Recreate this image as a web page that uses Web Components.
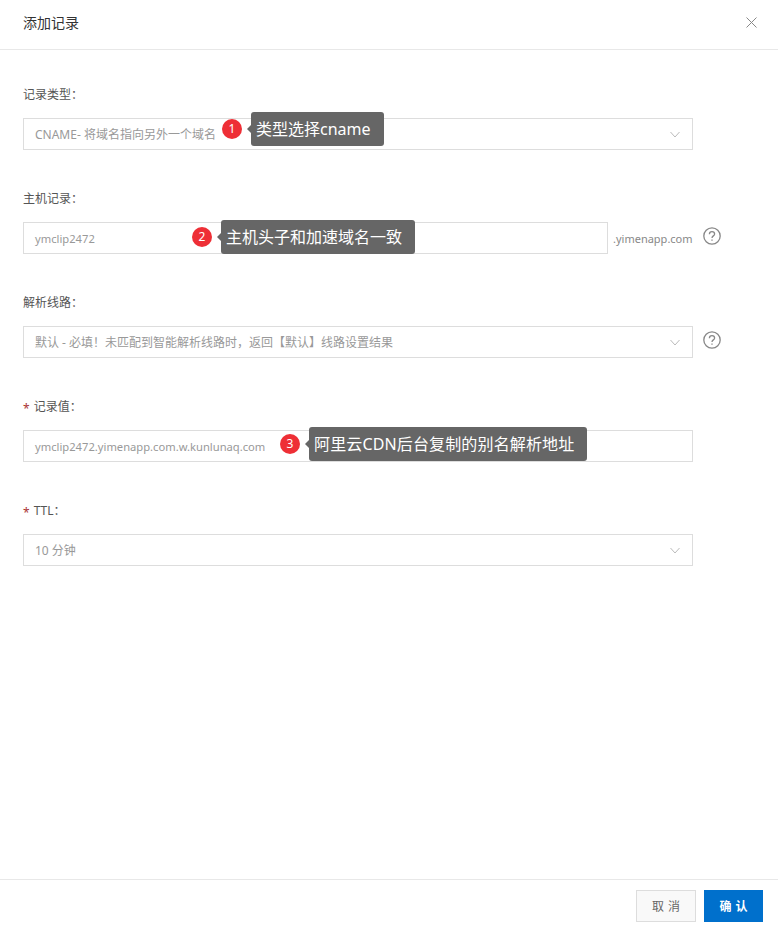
<!DOCTYPE html>
<html lang="zh">
<head>
<meta charset="utf-8">
<title>添加记录</title>
<style>
  html, body { margin: 0; height: 100%; background: #fff; }
  body { font-family: "Noto Sans", "Noto Sans CJK SC", sans-serif; }
</style>
</head>
<body>
<record-dialog>
  <form-field label="记录类型：">
    <select-box value="CNAME- 将域名指向另外一个域名"></select-box>
    <step-note slot="note" step="1" style="left:199px;top:-6px">类型选择cname</step-note>
  </form-field>
  <form-field label="主机记录：">
    <text-box value="ymclip2472" suffix=".yimenapp.com"></text-box>
    <help-icon slot="after"></help-icon>
    <step-note slot="note" step="2" style="left:169px;top:-2px">主机头子和加速域名一致</step-note>
  </form-field>
  <form-field label="解析线路：">
    <select-box value="默认 - 必填！未匹配到智能解析线路时，返回【默认】线路设置结果"></select-box>
    <help-icon slot="after"></help-icon>
  </form-field>
  <form-field label="记录值：" required>
    <text-box value="ymclip2472.yimenapp.com.w.kunlunaq.com"></text-box>
    <step-note slot="note" step="3" style="left:257px;top:-3px;--tip-spacing:.14px">阿里云CDN后台复制的别名解析地址</step-note>
  </form-field>
  <form-field label="TTL：" required>
    <select-box value="10 分钟"></select-box>
  </form-field>
</record-dialog>

<script>
class RecordDialog extends HTMLElement {
  constructor() {
    super();
    this.attachShadow({ mode: "open" });
    this.shadowRoot.innerHTML = `
      <style>
        :host { display: flex; flex-direction: column; height: 928px; box-sizing: border-box; }
        header {
          display: flex; align-items: center; justify-content: space-between;
          height: 43px; padding: 0 21px 6px 23px;
          border-bottom: 1px solid #e8e8e8;
          font-size: 14px; color: #333;
        }
        header svg { display: block; margin-top: 2px; }
        main { flex: 1; padding: 36px 0 0 23px; display: flex; flex-direction: column; gap: 40px; }
        footer {
          display: flex; justify-content: flex-end; gap: 8px;
          border-top: 1px solid #e8e8e8; padding: 10px 15px 6px 0;
        }
        button {
          width: 60px; height: 32px; padding: 0 0 0 4px; font: inherit; font-size: 12px;
          letter-spacing: 4px; border: 1px solid #ddd; background: #f9f9f9; color: #666;
        }
        button.primary { width: 59px; background: #0070cc; border-color: #0070cc; color: #fff; font-weight: 700; }
      </style>
      <header>
        <span>添加记录</span>
        <svg width="11" height="11" viewBox="0 0 11 11" fill="none" stroke="#888" stroke-width="1">
          <path d="M.5.5l10 10M10.5.5l-10 10"/>
        </svg>
      </header>
      <main><slot></slot></main>
      <footer>
        <button type="button">取消</button>
        <button type="button" class="primary">确认</button>
      </footer>`;
  }
}

class FormField extends HTMLElement {
  constructor() {
    super();
    this.attachShadow({ mode: "open" });
    this.shadowRoot.innerHTML = `
      <style>
        :host { display: block; }
        label { display: block; height: 18px; line-height: 18px; margin-bottom: 14px; font-size: 12px; color: #555; }
        i { font-style: normal; color: #a33; margin-right: 4px; vertical-align: -2px; }
        .row { position: relative; display: flex; align-items: center; width: 670px; height: 32px; }
        .control { width: 670px; flex: none; }
      </style>
      <label></label>
      <div class="row">
        <div class="control"><slot></slot></div>
        <slot name="after"></slot>
        <slot name="note"></slot>
      </div>`;
  }
  connectedCallback() {
    const label = this.shadowRoot.querySelector("label");
    label.textContent = this.getAttribute("label");
    if (this.hasAttribute("required")) {
      const star = document.createElement("i");
      star.textContent = "*";
      label.prepend(star);
    }
  }
}

class SelectBox extends HTMLElement {
  constructor() {
    super();
    this.attachShadow({ mode: "open" });
    this.shadowRoot.innerHTML = `
      <style>
        :host {
          display: flex; align-items: center; justify-content: space-between;
          height: 32px; box-sizing: border-box; padding: 0 12px 0 11px;
          border: 1px solid #ddd; font-size: 12px; color: #999;
        }
        svg { display: block; }
      </style>
      <span></span>
      <svg width="10" height="7" viewBox="0 0 10 7" fill="none" stroke="#bbb" stroke-width="1">
        <path d="M.5 1L5 6l4.5-5"/>
      </svg>`;
  }
  connectedCallback() {
    this.shadowRoot.querySelector("span").textContent = this.getAttribute("value");
  }
}

class TextBox extends HTMLElement {
  constructor() {
    super();
    this.attachShadow({ mode: "open" });
    this.shadowRoot.innerHTML = `
      <style>
        :host { display: flex; align-items: center; height: 32px; font-size: 11.2px; color: #999; }
        .input {
          flex: 1; height: 32px; line-height: 32px; box-sizing: border-box;
          padding: 0 11px; border: 1px solid #ddd;
        }
        .suffix { margin-left: 5px; width: 80px; white-space: nowrap; font-size: 11px; color: #888; }
        .suffix:empty { display: none; }
      </style>
      <div class="input"></div><div class="suffix"></div>`;
  }
  connectedCallback() {
    this.shadowRoot.querySelector(".input").textContent = this.getAttribute("value");
    this.shadowRoot.querySelector(".suffix").textContent = this.getAttribute("suffix") || "";
  }
}

class HelpIcon extends HTMLElement {
  constructor() {
    super();
    this.attachShadow({ mode: "open" });
    this.shadowRoot.innerHTML = `
      <style>
        :host { display: block; margin: -4px 0 0 10px; flex: none; }
        svg { display: block; }
      </style>
      <svg width="18" height="18" viewBox="0 0 18 18" fill="none" stroke="#888" stroke-width="1.3">
        <circle cx="9" cy="9" r="8.2"/>
        <path d="M6.4 7.2C6.4 5.6 7.6 4.7 9 4.7s2.6.9 2.6 2.3c0 1.9-2.6 1.9-2.6 4"/>
        <path d="M9 12.4v1.4"/>
      </svg>`;
  }
}

class StepNote extends HTMLElement {
  constructor() {
    super();
    this.attachShadow({ mode: "open" });
    this.shadowRoot.innerHTML = `
      <style>
        :host { position: absolute; display: flex; align-items: center; gap: 9px; }
        .badge {
          width: 20px; height: 20px; border-radius: 50%; background: #ee2f36; color: #fff;
          font-size: 12px; line-height: 20px; text-align: center; flex: none;
        }
        .tip {
          position: relative; height: 34px; line-height: 34px; padding: 0 13px 0 5px;
          background: #666; color: #fff; font-size: 16px; border-radius: 3px; white-space: nowrap;
          letter-spacing: var(--tip-spacing, 0);
        }
        .tip::before {
          content: ""; position: absolute; left: -4px; top: 13px;
          border: 4px solid transparent; border-left: 0; border-right-color: #666;
        }
      </style>
      <span class="badge"></span>
      <div class="tip"><slot></slot></div>`;
  }
  connectedCallback() {
    this.shadowRoot.querySelector(".badge").textContent = this.getAttribute("step");
  }
}

customElements.define("record-dialog", RecordDialog);
customElements.define("form-field", FormField);
customElements.define("select-box", SelectBox);
customElements.define("text-box", TextBox);
customElements.define("help-icon", HelpIcon);
customElements.define("step-note", StepNote);
</script>
</body>
</html>
